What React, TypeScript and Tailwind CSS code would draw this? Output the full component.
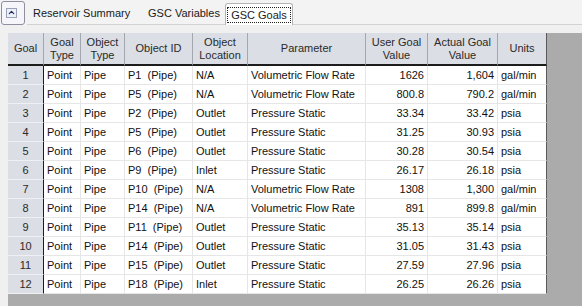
import { ChevronUp } from "lucide-react"

const cols = ["w-[36px]", "w-[37px]", "w-[44px]", "w-[68px]", "w-[55px]", "w-[118px]", "w-[62px]", "w-[70px]", "w-[49px]"]

const headers = ["Goal", "Goal\nType", "Object\nType", "Object ID", "Object\nLocation", "Parameter", "User Goal\nValue", "Actual Goal\nValue", "Units"]

const rows: string[][] = [
  ["Point", "Pipe", "P1  (Pipe)", "N/A", "Volumetric Flow Rate", "1626", "1,604", "gal/min"],
  ["Point", "Pipe", "P5  (Pipe)", "N/A", "Volumetric Flow Rate", "800.8", "790.2", "gal/min"],
  ["Point", "Pipe", "P2  (Pipe)", "Outlet", "Pressure Static", "33.34", "33.42", "psia"],
  ["Point", "Pipe", "P5  (Pipe)", "Outlet", "Pressure Static", "31.25", "30.93", "psia"],
  ["Point", "Pipe", "P6  (Pipe)", "Outlet", "Pressure Static", "30.28", "30.54", "psia"],
  ["Point", "Pipe", "P9  (Pipe)", "Inlet", "Pressure Static", "26.17", "26.18", "psia"],
  ["Point", "Pipe", "P10  (Pipe)", "N/A", "Volumetric Flow Rate", "1308", "1,300", "gal/min"],
  ["Point", "Pipe", "P14  (Pipe)", "N/A", "Volumetric Flow Rate", "891", "899.8", "gal/min"],
  ["Point", "Pipe", "P11  (Pipe)", "Outlet", "Pressure Static", "35.13", "35.14", "psia"],
  ["Point", "Pipe", "P14  (Pipe)", "Outlet", "Pressure Static", "31.05", "31.43", "psia"],
  ["Point", "Pipe", "P15  (Pipe)", "Outlet", "Pressure Static", "27.59", "27.96", "psia"],
  ["Point", "Pipe", "P18  (Pipe)", "Inlet", "Pressure Static", "26.25", "26.26", "psia"],
]

export default function App() {
  return (
    <div className="flex h-[306px] w-[582px] flex-col overflow-hidden bg-[#f0f0f0] font-['Liberation_Sans',Arial,sans-serif] text-[11px] text-[#111]">
      {/* tab strip */}
      <div className="flex h-[25px] items-start bg-[#f3f3f3]">
        <button className="ml-[1px] mt-[1px] flex h-[24px] w-[24px] items-center justify-center rounded-[3px] border border-[#8e8e9e] bg-[#f6f6fa]">
          <span className="-ml-[3px] -mt-[1px] flex h-[10px] w-[11px] items-center justify-center border border-[#9aa0b8] bg-[#eef0f8]">
            <ChevronUp className="h-[9px] w-[9px] text-[#1c2a5a]" strokeWidth={3} />
          </span>
        </button>
        <div className="ml-[2px] flex h-[25px] flex-1 items-end border-b border-[#d2d2d2] text-[11px] text-[#1a1a1a]">
          <div className="flex h-[22px] w-[121px] items-center pl-[6px]">Reservoir Summary</div>
          <div className="flex h-[22px] w-[77px] items-center">GSC Variables</div>
          <div className="-mb-px flex h-[22px] w-[68px] shrink-0 items-center justify-center rounded-t-[3px] border-x border-t border-[#b4b4b4] bg-white">
            <span className="whitespace-nowrap border border-dotted border-[#222] px-[3px] leading-[14px]">GSC Goals</span>
          </div>
        </div>
      </div>

      {/* grid area */}
      <div className="flex flex-1 pl-[8px] pt-[8px]">
        <div className="flex-1 bg-[#ababab]">
          <div className="flex w-[539px] bg-[#dbdee4] text-[#2a2a2a]">
            {headers.map((h, i) => (
              <div
                key={i}
                className={`${cols[i]} flex h-[33px] items-center justify-center whitespace-pre border-b-2 border-r border-b-[#1c1c1c] text-center leading-[13px] ${i === 8 ? "border-r-[#5a5a5a]" : "border-r-[#a3a7ae]"}`}
              >
                {h}
              </div>
            ))}
          </div>
          {rows.map((r, ri) => (
            <div key={ri} className="flex h-[19px] w-[539px]">
              <div className={`${cols[0]} flex items-center justify-center border-b border-r border-b-[#eef0f3] border-r-[#1c1c1c] bg-[#dbdee4] text-[#2a2a2a]`}>
                {ri + 1}
              </div>
              {r.map((c, ci) => {
                const num = ci === 5 || ci === 6
                return (
                  <div
                    key={ci}
                    className={`${cols[ci + 1]} flex items-center whitespace-pre border-b border-r border-b-[#e6e6e6] bg-white ${num ? "justify-end pr-[3px]" : "pl-[3px]"} ${ci === 7 ? "border-r-[#5a5a5a]" : "border-r-[#e6e6e6]"}`}
                  >
                    {c}
                  </div>
                )
              })}
            </div>
          ))}
        </div>
      </div>
    </div>
  )
}
